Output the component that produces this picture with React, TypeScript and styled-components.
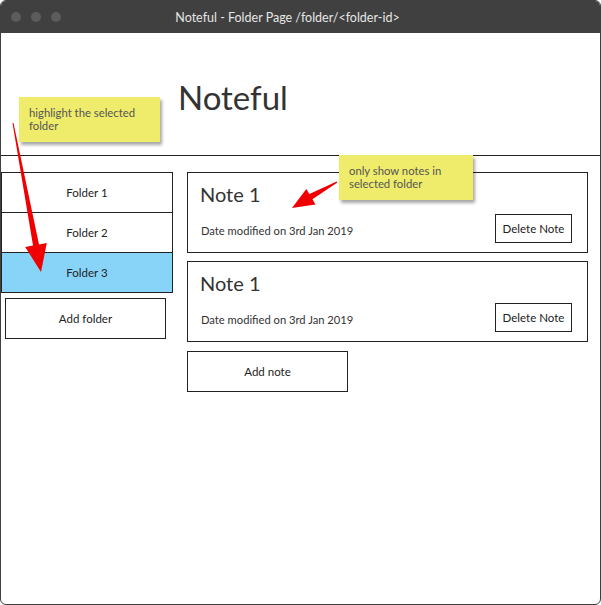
import React from 'react'
import styled, { createGlobalStyle } from 'styled-components'

const GlobalStyle = createGlobalStyle`
  html, body {
    margin: 0;
    padding: 0;
    background: #fff;
  }
  body {
    font-family: 'Lato', 'Liberation Sans', sans-serif;
    color: #222;
  }
`

const Window = styled.div`
  position: relative;
  width: 601px;
  height: 605px;
  box-sizing: border-box;
  border: 1px solid #3f3f3f;
  border-radius: 6px;
  overflow: hidden;
  display: flex;
  flex-direction: column;
  background: #fff;
`

const TitleBar = styled.div`
  height: 32px;
  flex-shrink: 0;
  background: #404040;
  display: flex;
  align-items: center;
  position: relative;
  padding-left: 10px;
  gap: 10px;
`

const Dot = styled.span`
  width: 10px;
  height: 10px;
  border-radius: 50%;
  background: #5c5c5c;
`

const Title = styled.div`
  position: absolute;
  left: 0;
  right: 26px;
  text-align: center;
  font-size: 12.5px;
  color: #e6e6e6;
`

const Body = styled.div`
  flex: 1;
  position: relative;
`

const Header = styled.header`
  height: 122px;
  border-bottom: 1px solid #222;
  display: flex;
  align-items: center;
  padding-left: 177px;
`

const Heading = styled.h1`
  margin: 0;
  font-size: 33px;
  font-weight: 400;
  color: #333;
  padding-top: 5px;
`

const Main = styled.main`
  display: flex;
  gap: 14px;
  padding-top: 16px;
`

const Sidebar = styled.nav`
  width: 172px;
  display: flex;
  flex-direction: column;
`

const FolderItem = styled.div<{ $selected?: boolean }>`
  height: 41px;
  box-sizing: border-box;
  border: 1px solid #222;
  margin-top: -1px;
  &:first-child {
    margin-top: 0;
  }
  background: ${(p) => (p.$selected ? '#87d4f8' : '#fff')};
  display: flex;
  align-items: center;
  justify-content: center;
  font-size: 11.5px;
  color: #222;
`

const OutlineButton = styled.div<{ $w: number; $h: number }>`
  width: ${(p) => p.$w}px;
  height: ${(p) => p.$h}px;
  box-sizing: border-box;
  border: 1px solid #222;
  background: #fff;
  display: flex;
  align-items: center;
  justify-content: center;
  font-size: 11.5px;
  color: #222;
  flex-shrink: 0;
`

const AddFolder = styled(OutlineButton)`
  margin: 5px 0 0 4px;
`

const NoteList = styled.section`
  width: 401px;
  display: flex;
  flex-direction: column;
  gap: 8px;
`

const NoteCard = styled.article`
  height: 81px;
  box-sizing: border-box;
  border: 1px solid #222;
  padding: 9px 15px 9px 12px;
  display: flex;
  flex-direction: column;
  justify-content: space-between;
`

const NoteTitle = styled.h2`
  margin: 0;
  font-size: 20px;
  font-weight: 400;
  color: #333;
`

const NoteFooter = styled.div`
  display: flex;
  align-items: center;
  justify-content: space-between;
`

const DateText = styled.span`
  font-size: 11.2px;
  color: #333;
  padding-left: 1px;
  padding-top: 4px;
`

const AddNote = styled(OutlineButton)`
  margin-top: 1px;
`

const Sticky = styled.div<{ $x: number; $y: number; $w: number }>`
  position: absolute;
  left: ${(p) => p.$x}px;
  top: ${(p) => p.$y}px;
  width: ${(p) => p.$w}px;
  height: 45px;
  box-sizing: border-box;
  padding: 9px 10px;
  background: #efec6b;
  box-shadow: 2px 3px 3px rgba(0, 0, 0, 0.35);
  font-size: 11.3px;
  line-height: 13px;
  color: #555;
`

const Arrows = styled.svg`
  position: absolute;
  left: -1px;
  top: -33px;
  pointer-events: none;
`

const App = () => {
  return (
    <>
      <GlobalStyle />
      <Window>
        <TitleBar>
          <Dot />
          <Dot />
          <Dot />
          <Title>Noteful - Folder Page /folder/&lt;folder-id&gt;</Title>
        </TitleBar>
        <Body>
          <Header>
            <Heading>Noteful</Heading>
          </Header>
          <Main>
            <Sidebar>
              <FolderItem>Folder 1</FolderItem>
              <FolderItem>Folder 2</FolderItem>
              <FolderItem $selected>Folder 3</FolderItem>
              <AddFolder $w={161} $h={41}>
                Add folder
              </AddFolder>
            </Sidebar>
            <NoteList>
              {[0, 1].map((i) => (
                <NoteCard key={i}>
                  <NoteTitle>Note 1</NoteTitle>
                  <NoteFooter>
                    <DateText>Date modified on 3rd Jan 2019</DateText>
                    <OutlineButton $w={77} $h={29}>
                      Delete Note
                    </OutlineButton>
                  </NoteFooter>
                </NoteCard>
              ))}
              <AddNote $w={161} $h={41}>
                Add note
              </AddNote>
            </NoteList>
          </Main>
          <Sticky $x={18} $y={64} $w={141}>
            highlight the selected folder
          </Sticky>
          <Sticky $x={338} $y={122} $w={134}>
            only show notes in selected folder
          </Sticky>
          <Arrows width="601" height="605" viewBox="0 0 601 605">
            <polygon
              fill="#f00000"
              points="12.5,123.1 13.5,122.9 39,244.4 46.8,243 41,272 25.2,247 33,245.6"
            />
            <polygon
              fill="#f00000"
              points="337.4,182.6 336.6,181.4 309.4,194.1 306.3,189 292,208 315.5,204.4 312.4,199.3"
            />
          </Arrows>
        </Body>
      </Window>
    </>
  )
}

export default App
